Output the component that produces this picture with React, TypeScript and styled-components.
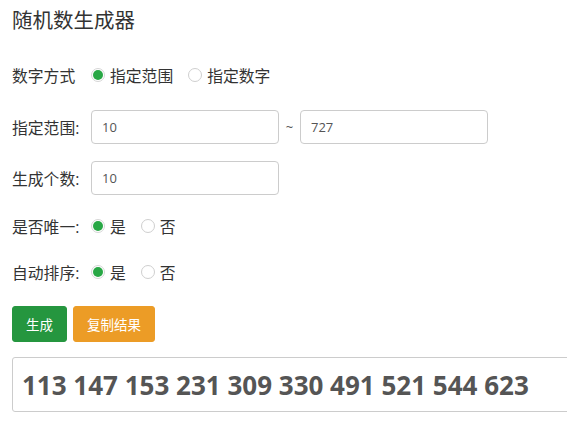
import React from "react";
import styled, { createGlobalStyle } from "styled-components";

const Global = createGlobalStyle`
  html, body { margin: 0; padding: 0; background: #fff; overflow: hidden; }
  body { font-family: "Open Sans", "Noto Sans CJK SC", sans-serif; color: #333; }
`;

const Page = styled.div`
  width: 100%;
  padding: 0 0 0 12px;
  box-sizing: border-box;
  overflow: hidden;
`;

const Title = styled.h1`
  margin: 0;
  padding-top: 8px;
  height: 32px;
  box-sizing: border-box;
  font-size: 20.5px;
  line-height: 24px;
  font-weight: 400;
  color: #333;
`;

const Row = styled.div<{ $mt: number; $h: number }>`
  display: flex;
  align-items: center;
  margin-top: ${(p) => p.$mt}px;
  height: ${(p) => p.$h}px;
  font-size: 15.8px;
`;

const Label = styled.span`
  width: 79px;
  flex: none;
  white-space: nowrap;
`;

const Option = styled.label`
  display: inline-flex;
  align-items: center;
  margin-right: 15px;
  cursor: pointer;
`;

const Dot = styled.span<{ $on?: boolean }>`
  width: 14px;
  height: 14px;
  box-sizing: border-box;
  border-radius: 50%;
  border: 1px solid ${(p) => (p.$on ? "#d6d6d6" : "#cfcfcf")};
  background: #fff;
  margin-right: 5px;
  display: inline-flex;
  align-items: center;
  justify-content: center;
  &::after {
    content: "";
    display: ${(p) => (p.$on ? "block" : "none")};
    width: 10px;
    height: 10px;
    border-radius: 50%;
    background: #28a745;
  }
`;

const Input = styled.input`
  width: 188px;
  height: 34px;
  box-sizing: border-box;
  border: 1px solid #ccc;
  border-radius: 4px;
  padding: 0 10px;
  font-family: "Open Sans", sans-serif;
  font-size: 13px;
  color: #555;
  outline: none;
`;

const Tilde = styled.span`
  width: 21px;
  text-align: center;
  font-size: 13px;
  color: #555;
`;

const Buttons = styled.div`
  display: flex;
  gap: 6px;
  margin-top: 19px;
  height: 36px;
`;

const Btn = styled.button<{ $color: string }>`
  height: 36px;
  padding: 0 13px;
  border: 1px solid ${(p) => p.$color};
  border-radius: 3px;
  background: ${(p) => p.$color};
  color: #fff;
  font-family: "Open Sans", "Noto Sans CJK SC", sans-serif;
  font-size: 13.5px;
  cursor: pointer;
`;

const Result = styled.div`
  margin-top: 15px;
  height: 55px;
  width: 600px;
  box-sizing: border-box;
  border: 1px solid #ccc;
  border-radius: 3px;
  padding: 0 9px;
  display: flex;
  align-items: center;
  font-family: "Open Sans", sans-serif;
  font-weight: 700;
  font-size: 26px;
  color: #555;
  white-space: nowrap;
`;

function Radio({ on, children }: { on?: boolean; children: React.ReactNode }) {
  return (
    <Option>
      <Dot $on={on} />
      {children}
    </Option>
  );
}

export default function App() {
  return (
    <>
      <Global />
      <Page>
        <Title>随机数生成器</Title>
        <Row $mt={26} $h={34}>
          <Label>数字方式</Label>
          <Radio on>指定范围</Radio>
          <Radio>指定数字</Radio>
        </Row>
        <Row $mt={18} $h={34}>
          <Label>指定范围:</Label>
          <Input defaultValue="10" />
          <Tilde>~</Tilde>
          <Input defaultValue="727" />
        </Row>
        <Row $mt={17} $h={34}>
          <Label>生成个数:</Label>
          <Input defaultValue="10" />
        </Row>
        <Row $mt={16} $h={30}>
          <Label>是否唯一:</Label>
          <Radio on>是</Radio>
          <Radio>否</Radio>
        </Row>
        <Row $mt={16} $h={30}>
          <Label>自动排序:</Label>
          <Radio on>是</Radio>
          <Radio>否</Radio>
        </Row>
        <Buttons>
          <Btn $color="#25963f">生成</Btn>
          <Btn $color="#ec9c26">复制结果</Btn>
        </Buttons>
        <Result>113 147 153 231 309 330 491 521 544 623</Result>
      </Page>
    </>
  );
}
